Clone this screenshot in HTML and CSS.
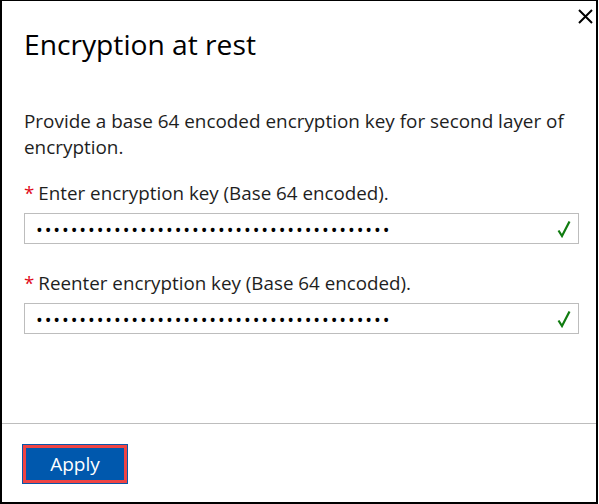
FILE: index.html
```html
<!DOCTYPE html>
<html lang="en">
<head>
<meta charset="utf-8">
<title>Encryption at rest</title>
<link rel="stylesheet" href="styles.css">
</head>
<body>
<div class="dialog">
  <button class="close" aria-label="Close">
    <svg width="15" height="15" viewBox="0 0 15 15"><path d="M1 1L14 14M14 1L1 14" stroke="#000" stroke-width="2" fill="none"/></svg>
  </button>
  <div class="content">
    <h1 class="title">Encryption at rest</h1>
    <p class="desc">Provide a base 64 encoded encryption key for second layer of encryption.</p>
    <div class="field">
      <label class="label"><span class="req">*</span>Enter encryption key (Base 64 encoded).</label>
      <div class="input-box">
        <input class="pw" type="password" value="12345678901234567890123456789012345678901" readonly>
        <svg class="check" width="14" height="18" viewBox="0 0 14 18"><path d="M1.5 10.5L5 16L12.5 1.5" stroke="#107c10" stroke-width="2.2" fill="none"/></svg>
      </div>
    </div>
    <div class="field">
      <label class="label"><span class="req">*</span>Reenter encryption key (Base 64 encoded).</label>
      <div class="input-box">
        <input class="pw" type="password" value="12345678901234567890123456789012345678901" readonly>
        <svg class="check" width="14" height="18" viewBox="0 0 14 18"><path d="M1.5 10.5L5 16L12.5 1.5" stroke="#107c10" stroke-width="2.2" fill="none"/></svg>
      </div>
    </div>
  </div>
  <div class="footer">
    <button class="apply">Apply</button>
  </div>
</div>
</body>
</html>
```
FILE: styles.css
```css
* { box-sizing: border-box; }
html, body { margin: 0; padding: 0; background: #fff; }
body { width: 599px; height: 504px; overflow: hidden; font-family: "Open Sans", "Noto Sans", sans-serif; }
.dialog {
  position: relative;
  width: 598px;
  height: 504px;
  border-top: 1px solid #000;
  border-left: 2px solid #000;
  border-right: 2px solid #000;
  border-bottom: 2px solid #000;
  display: flex;
  flex-direction: column;
}
.close {
  position: absolute;
  top: 4px;
  right: 0;
  width: 22px;
  height: 22px;
  padding: 0;
  border: 0;
  background: none;
  display: flex;
  align-items: center;
  justify-content: center;
}
.content { flex: 1; padding: 0 17px 0 22px; }
.title {
  margin: 23px 0 0;
  font-size: 28.2px;
  font-weight: 400;
  line-height: 40px;
  color: #000;
}
.desc {
  margin: 44px 0 0;
  font-size: 18.9px;
  line-height: 26px;
  color: #1e1e1e;
}
.field { margin-top: 20px; }
.field + .field { margin-top: 26px; }
.label { display: block; font-size: 18.8px; line-height: 26px; color: #1e1e1e; }
.req { color: #e00b1c; margin-right: 4px; }
.input-box {
  margin-top: 7px;
  height: 31px;
  border: 1px solid #bdbdbd;
  display: flex;
  align-items: center;
  padding: 0 7px 0 11px;
}
.pw {
  flex: 1;
  border: 0;
  outline: none;
  padding: 3px 0 0;
  font-family: "Open Sans", sans-serif;
  font-size: 18px;
  letter-spacing: 1.9px;
  color: #000;
  background: transparent;
}
.check { flex: none; }
.footer {
  border-top: 1px solid #bdbdbd;
  padding: 20px 0 18px 20px;
}
.apply {
  width: 106px;
  height: 40px;
  border: 1px solid #0a56a8;
  box-shadow: inset 0 0 0 3px #ef4444;
  background: #0058ad;
  color: #fff;
  font-family: "Open Sans", sans-serif;
  font-size: 19px;
  padding: 0;
}
```
